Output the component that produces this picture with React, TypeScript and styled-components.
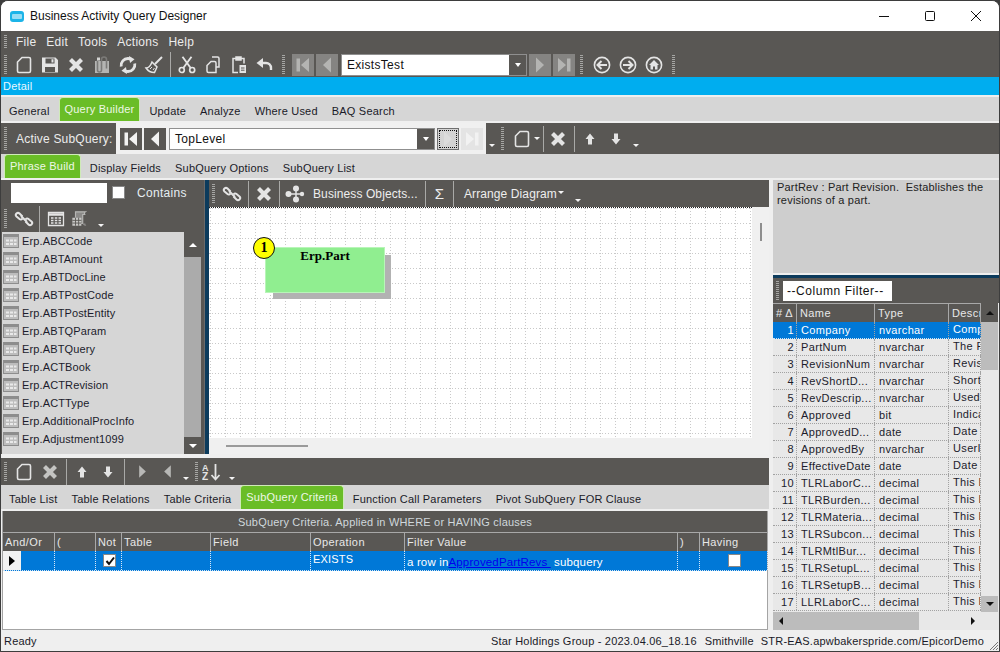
import React from "react";
import styled, { createGlobalStyle } from "styled-components";

const DARK = "#595754";
const LIGHT = "#efefef";
const STRIP = "#d6d6d6";
const ICON = "#e4e4e4";
const BLUE = "#0078d7";

const GlobalStyle = createGlobalStyle`
  html, body { margin: 0; padding: 0; background: #3d3d3d; }
  * { box-sizing: border-box; }
`;

const Window = styled.div`
  width: 1000px;
  height: 652px;
  display: flex;
  flex-direction: column;
  overflow: hidden;
  border: 1px solid #3d3d3d;
  border-radius: 8px 8px 0 0;
  background: ${LIGHT};
  font-family: "Liberation Sans", Arial, sans-serif;
  font-size: 11px;
  letter-spacing: 0.2px;
  color: #1a1a2a;
`;

const TitleBar = styled.div`
  height: 30px;
  flex: none;
  display: flex;
  align-items: center;
  background: #fff;
  padding-left: 9px;
  color: #111;
`;

const TitleIcon = styled.div`
  width: 14px;
  height: 11px;
  border-radius: 3px;
  background: #1cb4e8;
  border: 3px solid #1cb4e8;
  border-left-width: 2px;
  border-right-width: 2px;
  margin-right: 6px;
  &::after {
    content: "";
    display: block;
    height: 100%;
    background: #fff;
    border-radius: 1px;
    opacity: 0.55;
  }
`;

const TitleText = styled.span`
  flex: 1;
  font-size: 12px;
  letter-spacing: 0;
`;

const WinButton = styled.div`
  width: 46px;
  height: 30px;
  display: flex;
  align-items: center;
  justify-content: center;
  color: #111;
`;

const Bar = styled.div<{ $h: number; $pt?: number }>`
  height: ${(p) => p.$h}px;
  flex: none;
  display: flex;
  align-items: center;
  background: ${DARK};
  color: #eee;
  padding-top: ${(p) => p.$pt ?? 0}px;
`;

const Grip = styled.div<{ $h?: number; $ml?: number; $mr?: number }>`
  flex: none;
  width: 3px;
  height: ${(p) => p.$h ?? 20}px;
  margin-left: ${(p) => p.$ml ?? 3}px;
  margin-right: ${(p) => p.$mr ?? 4}px;
  background: repeating-linear-gradient(to bottom, #a6a6a4 0 1px, transparent 1px 2px);
`;

const MenuItem = styled.span`
  margin-right: 10px;
  color: #ececec;
  font-size: 12px;
  letter-spacing: 0.25px;
  &:first-of-type {
    margin-left: 1px;
  }
`;

const Slot = styled.div<{ $w?: number; $c?: string; $ml?: number }>`
  flex: none;
  width: ${(p) => p.$w ?? 26}px;
  height: 22px;
  margin-left: ${(p) => p.$ml ?? 0}px;
  display: flex;
  align-items: center;
  justify-content: center;
  color: ${(p) => p.$c ?? ICON};
`;

const Sep = styled.div<{ $w?: number; $h?: number }>`
  flex: none;
  width: ${(p) => p.$w ?? 6}px;
  height: ${(p) => p.$h ?? 26}px;
  display: flex;
  justify-content: center;
  &::before {
    content: "";
    width: 1px;
    background: #a9a9a7;
  }
`;

const NavButton = styled.div<{ $tone?: "off" | "on" | "focus" | "ghost"; $ml?: number }>`
  flex: none;
  width: 22px;
  height: 22px;
  margin-left: ${(p) => p.$ml ?? 2}px;
  display: flex;
  align-items: center;
  justify-content: center;
  background: ${(p) =>
    p.$tone === "on"
      ? DARK
      : p.$tone === "focus"
        ? "#d4d4d4"
        : p.$tone === "ghost"
          ? "#e4e4e4"
          : "#858482"};
  color: ${(p) =>
    p.$tone === "on"
      ? "#f2f2f2"
      : p.$tone === "focus"
        ? "#dcdcdc"
        : p.$tone === "ghost"
          ? "#f2f2f2"
          : "#b4b4b2"};
  border: ${(p) => (p.$tone === "focus" ? "1px solid #6f6f6f" : "none")};
  outline: ${(p) => (p.$tone === "focus" ? "1px dotted #111" : "none")};
  outline-offset: ${(p) => (p.$tone === "focus" ? "-3px" : "0")};
`;

const Combo = styled.div<{ $w: number; $ml?: number }>`
  flex: none;
  width: ${(p) => p.$w}px;
  height: 22px;
  margin-left: ${(p) => p.$ml ?? 3}px;
  display: flex;
  align-items: center;
  background: #fff;
  border: 1px solid #8f8f8f;
  color: #111;
  font-size: 12px;
  letter-spacing: 0.3px;
`;

const ComboText = styled.span`
  flex: 1;
  padding-left: 5px;
`;

const ComboArrow = styled.div`
  width: 17px;
  height: 100%;
  background: ${DARK};
  display: flex;
  align-items: center;
  justify-content: center;
  &::before {
    content: "";
    border: 3px solid transparent;
    border-top: 4px solid #fff;
    border-bottom: none;
  }
`;

const Caret = styled.div<{ $ml?: number; $mr?: number; $low?: boolean; $raise?: boolean }>`
  flex: none;
  margin-left: ${(p) => p.$ml ?? 0}px;
  margin-right: ${(p) => p.$mr ?? 0}px;
  margin-top: ${(p) => (p.$low ? 14 : p.$raise ? -3 : 0)}px;
  border: 3px solid transparent;
  border-top: 3px solid #f4f4f4;
  border-bottom: none;
  border-left-width: 3.5px;
  border-right-width: 3.5px;
`;

const DetailBar = styled.div`
  height: 18px;
  flex: none;
  background: #00adef;
  color: #eaf8ff;
  line-height: 18px;
  padding-left: 2px;
`;

const TabStrip = styled.div<{ $top?: number; $bottom?: number }>`
  height: 24px;
  flex: none;
  display: flex;
  gap: 4px;
  padding-left: 3px;
  background: ${STRIP};
  margin-top: ${(p) => p.$top ?? 0}px;
  margin-bottom: ${(p) => p.$bottom ?? 0}px;
`;

const Tab = styled.div<{ $active?: boolean }>`
  display: flex;
  align-items: center;
  white-space: nowrap;
  padding: ${(p) => (p.$active ? "0 5px 2px" : "3px 5px 0")};
  background: ${(p) => (p.$active ? "#6abd27" : "transparent")};
  color: ${(p) => (p.$active ? "#eef8e6" : "#1a1a28")};
  border: ${(p) => (p.$active ? "1px solid #cfeab8" : "none")};
  border-bottom: none;
  border-radius: ${(p) => (p.$active ? "4px 4px 0 0" : "0")};
`;

const SubLabel = styled.span`
  color: #ececec;
  font-size: 12px;
  margin-left: 3px;
  width: 100px;
  white-space: nowrap;
`;

const NavPanel = styled.div`
  flex: none;
  width: 370px;
  height: 100%;
  background: #f0f0f0;
  display: flex;
  align-items: center;
  padding-left: 2px;
`;

const Body = styled.div`
  flex: 1;
  min-height: 0;
  display: grid;
  grid-template-columns: 768px 4px 226px;
`;

const LeftArea = styled.div`
  display: flex;
  flex-direction: column;
  min-height: 0;
`;

const TopArea = styled.div`
  height: 274px;
  flex: none;
  display: grid;
  grid-template-columns: 203px 5px 560px;
  margin-bottom: 4px;
`;

const SourcePanel = styled.div`
  background: ${DARK};
  display: flex;
  flex-direction: column;
  min-height: 0;
`;

const FilterInput = styled.div<{ $w: number; $ml?: number }>`
  flex: none;
  width: ${(p) => p.$w}px;
  height: 20px;
  margin-left: ${(p) => p.$ml ?? 0}px;
  background: #fff;
  color: #111;
  line-height: 20px;
  padding-left: 4px;
  font-size: 12px;
  letter-spacing: 0.55px;
`;

const CheckBox = styled.div<{ $ml?: number }>`
  flex: none;
  width: 13px;
  height: 13px;
  margin-left: ${(p) => p.$ml ?? 0}px;
  background: #fff;
  border: 1px solid #888;
  display: flex;
  align-items: center;
  justify-content: center;
  color: #111;
`;

const ContainsLabel = styled.span`
  margin-left: 12px;
  color: #e6eef2;
  font-size: 12px;
  letter-spacing: 0.3px;
`;

const ListWrap = styled.div`
  flex: 1;
  min-height: 0;
  display: flex;
  margin-left: 1px;
  padding-right: 3px;
`;

const TableList = styled.div`
  flex: 1;
  background: ${STRIP};
  overflow: hidden;
`;

const ListItem = styled.div`
  height: 18px;
  display: flex;
  align-items: center;
  padding-left: 1px;
  color: #1c1c2c;
  letter-spacing: 0.13px;
  white-space: nowrap;
`;

const ItemIcon = styled.svg`
  width: 16px;
  height: 14px;
  margin-right: 3px;
  flex: none;
`;

const VRail = styled.div<{ $w: number; $bg: string }>`
  flex: none;
  width: ${(p) => p.$w}px;
  background: ${(p) => p.$bg};
  display: flex;
  flex-direction: column;
`;

const RailButton = styled.div<{ $h: number; $bg: string; $dir: "up" | "down"; $fg: string }>`
  flex: none;
  height: ${(p) => p.$h}px;
  background: ${(p) => p.$bg};
  display: flex;
  align-items: center;
  justify-content: center;
  &::before {
    content: "";
    border: 4px solid transparent;
    border-bottom: ${(p) => (p.$dir === "up" ? `4px solid ${p.$fg}` : "none")};
    border-top: ${(p) => (p.$dir === "down" ? `4px solid ${p.$fg}` : "none")};
  }
`;

const RailFill = styled.div`
  flex: 1;
`;

const Splitter = styled.div`
  background: #0c3b5c;
  border-left: 1px solid #6a6a6a;
`;

const CenterPanel = styled.div`
  display: flex;
  flex-direction: column;
  min-height: 0;
  background: #f0f0f0;
`;

const BarLabel = styled.span<{ $w?: number; $ml?: number }>`
  flex: none;
  width: ${(p) => (p.$w ? `${p.$w}px` : "auto")};
  margin-left: ${(p) => p.$ml ?? 0}px;
  color: #eeeeee;
  font-size: 12px;
  letter-spacing: 0.1px;
  white-space: nowrap;
`;

const Sigma = styled.span`
  width: 25px;
  flex: none;
  text-align: center;
  font-size: 15px;
  color: #eee;
`;

const CanvasRow = styled.div`
  flex: 1;
  min-height: 0;
  display: flex;
`;

const Canvas = styled.div`
  flex: 1;
  position: relative;
  overflow: hidden;
  background-color: #fff;
  border-top: 1px dotted #222;
  background-image:
    conic-gradient(from 270deg at 1px 1px, #c9c9c9 25%, transparent 0),
    conic-gradient(from 270deg at 1px 1px, #c9c9c9 25%, transparent 0);
  background-size: 15px 3px, 3px 15px;
  background-position: 1px 0, 0 0;
`;

const CanvasVRail = styled.div`
  width: 17px;
  flex: none;
  padding: 16px 0 0 8px;
`;

const VThumb = styled.div`
  width: 2px;
  height: 18px;
  background: #8e8e8e;
`;

const CanvasHRail = styled.div`
  height: 16px;
  flex: none;
  padding: 7px 0 0 17px;
`;

const HThumb = styled.div`
  width: 82px;
  height: 2px;
  background: #9a9a9a;
`;

const TableNode = styled.div`
  position: absolute;
  left: 56px;
  top: 39px;
  width: 120px;
  height: 46px;
  background: #90ee90;
  border: 1px solid #b8f5b8;
  box-shadow: 7px 7px 0 -1px #b2b2b2;
  text-align: center;
  font-family: "Liberation Serif", "Times New Roman", serif;
  font-weight: bold;
  font-size: 13px;
  letter-spacing: 0;
  color: #000;
`;

const NodeBadge = styled.div`
  position: absolute;
  left: 44px;
  top: 29px;
  width: 22px;
  height: 22px;
  border-radius: 50%;
  background: #ffff00;
  border: 1px solid #111;
  display: flex;
  align-items: center;
  justify-content: center;
  font-family: "Liberation Serif", "Times New Roman", serif;
  font-weight: bold;
  font-size: 14px;
  color: #000;
  z-index: 1;
`;

const CriteriaGrid = styled.div`
  flex: 1;
  min-height: 0;
  margin: 2px 1px 0 1px;
  background: #fff;
  border: 1px solid #a4a4a4;
  border-top: none;
  display: flex;
  flex-direction: column;
`;

const CriteriaCaption = styled.div`
  height: 21px;
  flex: none;
  background: ${DARK};
  color: #d0d8dc;
  text-align: center;
  line-height: 22px;
`;

const CRITERIA_COLS = "52px 41px 26px 89px 100px 94px 273px 22px 68px";

const CriteriaHead = styled.div`
  display: grid;
  grid-template-columns: ${CRITERIA_COLS};
  height: 19px;
  flex: none;
  background: ${DARK};
  border-top: 1px solid #a8a8a8;
`;

const HeadCell = styled.div`
  color: #e8e8e8;
  line-height: 18px;
  padding-left: 2px;
  border-right: 1px solid #a8a8a8;
  letter-spacing: 0.4px;
  white-space: nowrap;
  overflow: hidden;
`;

const CriteriaRow = styled.div`
  display: grid;
  grid-template-columns: ${CRITERIA_COLS};
  height: 20px;
  flex: none;
  background: ${BLUE};
  color: #fff;
  border-bottom: 1px dotted #cfe4f7;
`;

const RowCell = styled.div<{ $center?: boolean; $raise?: boolean }>`
  border-right: 1px dotted #d8e8f8;
  padding-left: 2px;
  padding-top: ${(p) => (p.$center ? 0 : p.$raise ? 2 : 3)}px;
  display: flex;
  align-items: ${(p) => (p.$raise ? "flex-start" : "center")};
  justify-content: ${(p) => (p.$center ? "center" : "flex-start")};
  white-space: pre;
`;

const FilterText = styled.span`
  font-size: 11.5px;
  letter-spacing: 0.15px;
`;

const SelectorCell = styled.div`
  display: flex;
  border-right: 1px dotted #d8e8f8;
`;

const RowSelector = styled.div`
  width: 18px;
  background: #f2f2f2;
  display: flex;
  align-items: center;
  justify-content: center;
  &::before {
    content: "";
    border: 5px solid transparent;
    border-left: 6px solid #000;
    border-right: none;
  }
`;

const QueryLink = styled.span`
  color: #0000ee;
  text-decoration: underline;
`;

const Gutter = styled.div`
  background: ${LIGHT};
`;

const RightPanel = styled.div`
  display: flex;
  flex-direction: column;
  min-height: 0;
`;

const Description = styled.div`
  height: 93px;
  flex: none;
  background: #cecece;
  padding: 1px 4px;
  color: #222;
  line-height: 13px;
  letter-spacing: 0.2px;
  white-space: pre-wrap;
`;

const HSplit = styled.div`
  height: 5px;
  flex: none;
  background: #0c3b5c;
  border-top: 2px solid ${LIGHT};
`;

const ColumnArea = styled.div`
  flex: 1;
  min-height: 0;
  display: flex;
  flex-direction: column;
  background: #e8e8e8;
`;

const ColumnBody = styled.div`
  flex: 1;
  min-height: 0;
  display: flex;
`;

const ColumnTable = styled.div`
  width: 208px;
  flex: none;
  overflow: hidden;
`;

const COLUMN_COLS = "24px 78px 74px 32px";

const ColumnHead = styled.div`
  display: grid;
  grid-template-columns: ${COLUMN_COLS};
  height: 19px;
  background: ${DARK};
  border-top: 1px solid #a8a8a8;
`;

const ColumnHeadCell = styled.div`
  color: #e8e8e8;
  line-height: 18px;
  padding-left: 3px;
  border-right: 1px solid #a8a8a8;
  white-space: nowrap;
  overflow: hidden;
  letter-spacing: 0.4px;
`;

const ColumnRow = styled.div<{ $selected?: boolean }>`
  display: grid;
  grid-template-columns: ${COLUMN_COLS};
  height: 17px;
  background: ${(p) => (p.$selected ? BLUE : "#e8e8e8")};
  color: ${(p) => (p.$selected ? "#fff" : "#1c1c2c")};
  border-bottom: 1px dotted ${(p) => (p.$selected ? "#cfe4f7" : "#a2a2a2")};
`;

const ColumnCell = styled.div<{ $num?: boolean; $raise?: boolean }>`
  border-right: 1px dotted #a2a2a2;
  line-height: ${(p) => (p.$raise ? 14 : 17)}px;
  padding: ${(p) => (p.$num ? "0 2px 0 0" : "0 0 0 4px")};
  text-align: ${(p) => (p.$num ? "right" : "left")};
  white-space: nowrap;
  overflow: hidden;
  letter-spacing: 0.35px;
`;

const HScroll = styled.div`
  height: 18px;
  flex: none;
  display: flex;
  align-items: stretch;
`;

const HScrollTrack = styled.div`
  width: 208px;
  flex: none;
  display: flex;
  background: #e8e8e8;
  position: relative;
`;

const HScrollThumb = styled.div`
  width: 146px;
  background: #bcbcbc;
`;

const ArrowGlyph = styled.div<{ $dir: "left" | "right" }>`
  position: absolute;
  top: 5px;
  ${(p) => (p.$dir === "left" ? "left: 6px;" : "right: 6px;")}
  border: 4px solid transparent;
  border-${(p) => (p.$dir === "left" ? "right" : "left")}: 4px solid #111;
  border-${(p) => p.$dir}: none;
`;

const StatusBar = styled.div`
  height: 21px;
  flex: none;
  display: flex;
  align-items: center;
  padding: 0 15px 0 3px;
  background: ${LIGHT};
  position: relative;
  color: #1a1a28;
`;

const StatusGap = styled.span<{ $w: number }>`
  flex: none;
  width: ${(p) => p.$w}px;
`;

const StatusFill = styled.span`
  flex: 1;
`;

const ResizeGrip = styled.svg`
  position: absolute;
  right: 0;
  bottom: 0;
  width: 12px;
  height: 12px;
`;

const Icon = styled.svg<{ $s?: number }>`
  width: ${(p) => p.$s ?? 20}px;
  height: ${(p) => p.$s ?? 20}px;
  display: block;
`;

type Ico = { s?: number };

const NewDoc = ({ s }: Ico) => (
  <Icon $s={s} viewBox="0 0 20 20" fill="none" stroke="currentColor" strokeWidth="1.6">
    <path d="M8 2.5h7a1.5 1.5 0 0 1 1.5 1.5v12a1.5 1.5 0 0 1-1.5 1.5H5A1.5 1.5 0 0 1 3.5 16V7z" />
  </Icon>
);
const Save = () => (
  <Icon viewBox="0 0 20 20" fill="currentColor" fillRule="evenodd">
    <path d="M2 2.5h13.5L18 5v12.5H2zM5.500 3.500v5h9v-5zM5 12v5h10v-5z" />
    <path d="M11.500 4.200h2v3.200h-2z" />
  </Icon>
);
const Cross = () => (
  <Icon viewBox="0 0 20 20" fill="none" stroke="currentColor" strokeWidth="4.2">
    <path d="M4.500 4.500l11 11M15.500 4.500l-11 11" />
  </Icon>
);
const ClipDoc = () => (
  <Icon viewBox="0 0 20 20" fill="none">
    <path d="M3 6h14v12H3z" fill="#b4b4b2" />
    <path d="M7 4.500v10a2 2 0 0 0 4 0V4a2.500 2.500 0 0 1 5 0v9" stroke="#7b7a78" strokeWidth="1.6" transform="translate(-1.5 .5)" />
    <path d="M5 2.500h3v3H5z" fill="#d4d4d2" />
  </Icon>
);
const Refresh = () => (
  <Icon viewBox="0 0 20 20" fill="none" stroke="currentColor" strokeWidth="2.8">
    <path d="M3.200 11.500A7 7 0 0 1 10 3.500c1 0 2 .2 3 .8" />
    <path d="M16.800 8.500A7 7 0 0 1 10 16.500c-1 0-2-.2-3-.8" />
    <path d="M11 1l5.500 3.200L12 8z" fill="currentColor" stroke="none" />
    <path d="M9 19l-5.500-3.200L8 12z" fill="currentColor" stroke="none" />
  </Icon>
);
const Broom = () => (
  <Icon viewBox="0 0 20 20" fill="none" stroke="currentColor" strokeWidth="1.5">
    <path d="M11 9l7-7" strokeWidth="2" />
    <path d="M8 7l5 5-2.500 5.500C8 17.500 4 16 2 13c2 0 4.500-2 6-6z" />
    <path d="M6 14l2-2M9 15l1.500-2" strokeWidth="1" />
  </Icon>
);
const Scissors = () => (
  <Icon viewBox="0 0 20 20" fill="none" stroke="currentColor" strokeWidth="1.7">
    <circle cx="4.800" cy="15" r="2.500" />
    <circle cx="15.200" cy="15" r="2.500" />
    <path d="M6.300 13L14.500 1.800M13.700 13L5.500 1.800" strokeWidth="1.9" />
  </Icon>
);
const Copy = () => (
  <Icon viewBox="0 0 20 20" fill="none" stroke="currentColor" strokeWidth="1.5">
    <path d="M9 2h5.500A1.500 1.500 0 0 1 16 3.500v8.500h-3" />
    <path d="M8 6.500h3.500A1.500 1.500 0 0 1 13 8v9.500H5.500A1.500 1.500 0 0 1 4 16V10.500z" />
  </Icon>
);
const Paste = () => (
  <Icon viewBox="0 0 20 20" fill="none" stroke="currentColor" strokeWidth="1.5">
    <path d="M7 3.500H4v14h5M12 3.500h3v5" />
    <path d="M7 2h5v3H7z" fill="currentColor" />
    <path d="M10.500 10H17v8h-6.500z" fill="currentColor" stroke="none" />
    <path d="M12 13h3.500M12 15.200h3.500" stroke="#595754" strokeWidth="1" />
  </Icon>
);
const Undo = () => (
  <Icon viewBox="0 0 20 20" fill="none" stroke="currentColor" strokeWidth="2.4">
    <path d="M6 8h5a5 5 0 0 1 5 5v2" />
    <path d="M8 3v10L1.500 8z" fill="currentColor" stroke="none" />
  </Icon>
);
const First = () => (
  <Icon $s={18} viewBox="0 0 18 18" fill="currentColor">
    <path d="M2.500 2.500h3.500v13H2.500zM15 2L7 9l8 7z" />
  </Icon>
);
const Prev = ({ s = 18 }: Ico) => (
  <Icon $s={s} viewBox="0 0 18 18" fill="currentColor">
    <path d="M13 1.500L5 9l8 7.500z" />
  </Icon>
);
const Next = ({ s = 18 }: Ico) => (
  <Icon $s={s} viewBox="0 0 18 18" fill="currentColor">
    <path d="M5 1.500L13 9l-8 7.500z" />
  </Icon>
);
const Last = () => (
  <Icon $s={18} viewBox="0 0 18 18" fill="currentColor">
    <path d="M15.500 2.500H12v13h3.500zM3 2l8 7-8 7z" />
  </Icon>
);
const Back = () => (
  <Icon viewBox="0 0 20 20" fill="none" stroke="currentColor" strokeWidth="1.6">
    <circle cx="10" cy="10" r="7.600" />
    <path d="M15 10H6M9.500 6l-4 4 4 4" strokeWidth="2" />
  </Icon>
);
const Forward = () => (
  <Icon viewBox="0 0 20 20" fill="none" stroke="currentColor" strokeWidth="1.6">
    <circle cx="10" cy="10" r="7.600" />
    <path d="M5 10h9M10.500 6l4 4-4 4" strokeWidth="2" />
  </Icon>
);
const Home = () => (
  <Icon viewBox="0 0 20 20" fill="none" stroke="currentColor" strokeWidth="1.6">
    <circle cx="10" cy="10" r="7.600" />
    <path d="M10 5L5 10h1.500v4.500h2.500v-3h2v3h2.500V10H15z" fill="currentColor" stroke="none" />
  </Icon>
);
const Chain = () => (
  <Icon viewBox="0 0 20 20" fill="none" stroke="currentColor" strokeWidth="2">
    <path d="M8.500 7.500L5.500 4.500a2.100 2.100 0 0 0-3 3l3 2.500a2.100 2.100 0 0 0 3-.5" />
    <path d="M11.500 12.500l3 3a2.100 2.100 0 0 0 3-3l-3-2.500a2.100 2.100 0 0 0-3 .5" />
    <path d="M7 7l6 6" />
  </Icon>
);
const TableIcon = () => (
  <Icon viewBox="0 0 20 20" fill="none" stroke="currentColor" strokeWidth="1.3">
    <path d="M2.500 3.500h15v13h-15z" />
    <path d="M2.500 5.500h15" strokeWidth="2.500" />
    <path d="M5 9h2.500M8.800 9h2.500M12.500 9H15M5 11.500h2.500M8.800 11.500h2.500M12.500 11.500H15M5 14h2.500M8.800 14h2.500M12.500 14H15" strokeWidth="1.6" />
  </Icon>
);
const TableScroll = () => (
  <Icon viewBox="0 0 20 20" fill="none" stroke="#b6b6b4" strokeWidth="1.3">
    <path d="M5 2h11c-1.500 1-1.500 3 0 3H13v10H5z" fill="#8b8a88" />
    <path d="M1.500 8.500h10v9h-10z" fill="#c8c8c6" stroke="none" />
    <path d="M1.500 11.500h10M1.500 14.500h10M5 8.500v9M8.500 8.500v9" stroke="#595754" strokeWidth="1" />
    <path d="M13 15c0 2 2 2.500 4 2.500-1-1-1-2.500-1-2.500z" fill="#8b8a88" stroke="none" />
  </Icon>
);
const Nodes = () => (
  <Icon viewBox="0 0 20 20" fill="currentColor" stroke="currentColor" strokeWidth="1.5">
    <circle cx="11" cy="4.500" r="3" stroke="none" />
    <circle cx="3.500" cy="10" r="3" stroke="none" />
    <circle cx="17" cy="10" r="2.200" stroke="none" />
    <circle cx="11" cy="15.500" r="3" stroke="none" />
    <path d="M3.500 10h13M11 4.500v11" />
  </Icon>
);
const UpArrow = () => (
  <Icon viewBox="0 0 20 20" fill="currentColor">
    <path d="M10 4.500L14.500 10H12v5.500H8V10H5.500z" />
  </Icon>
);
const DownArrow = () => (
  <Icon viewBox="0 0 20 20" fill="currentColor">
    <path d="M10 15.500L14.500 10H12V4.500H8V10H5.500z" />
  </Icon>
);
const SortAZ = () => (
  <Icon viewBox="0 0 22 20" style={{ width: 22 }} fill="currentColor">
    <text x="0" y="8.500" fontSize="9" fontWeight="bold" fontFamily="Liberation Sans">A</text>
    <text x="0" y="18" fontSize="10" fontWeight="bold" fontFamily="Liberation Sans">Z</text>
    <path d="M13.500 2v15M9.500 13l4 4.500 4-4.500" fill="none" stroke="currentColor" strokeWidth="1.8" />
  </Icon>
);

const CheckMark = () => (
  <svg width="10" height="10" viewBox="0 0 10 10" fill="none" stroke="currentColor" strokeWidth="2">
    <path d="M1.500 5l2.500 3 5-6.500" />
  </svg>
);

const MENU = ["File", "Edit", "Tools", "Actions", "Help"];
const TABLES = [
  "ABCCode", "ABTAmount", "ABTDocLine", "ABTPostCode", "ABTPostEntity", "ABTQParam",
  "ABTQuery", "ACTBook", "ACTRevision", "ACTType", "AdditionalProcInfo", "Adjustment1099",
];
const COLUMNS: [string, string, string][] = [
  ["Company", "nvarchar", "Comp"],
  ["PartNum", "nvarchar", "The P"],
  ["RevisionNum", "nvarchar", "Revis"],
  ["RevShortD...", "nvarchar", "Short"],
  ["RevDescrip...", "nvarchar", "Used"],
  ["Approved", "bit", "Indica"],
  ["ApprovedD...", "date", "Date"],
  ["ApprovedBy", "nvarchar", "UserI"],
  ["EffectiveDate", "date", "Date a"],
  ["TLRLaborC...", "decimal", "This L"],
  ["TLRBurden...", "decimal", "This L"],
  ["TLRMateria...", "decimal", "This L"],
  ["TLRSubcon...", "decimal", "This L"],
  ["TLRMtlBur...", "decimal", "This L"],
  ["TLRSetupL...", "decimal", "This L"],
  ["TLRSetupB...", "decimal", "This L"],
  ["LLRLaborC...", "decimal", "This L"],
];

const ListTableIcon = () => (
  <ItemIcon viewBox="0 0 16 14">
    <rect x="0.500" y="0.500" width="15" height="13" fill="#bdbdbd" stroke="#8d8d8d" />
    <rect x="1" y="1" width="14" height="2" fill="#8d8d8d" />
    <path d="M3 5.500h3v2H3zM7 5.500h3v2H7zM11 5.500h2.500v2H11zM3 9h3v2H3zM7 9h3v2H7zM11 9h2.500v2H11z" fill="#e9e9e9" />
  </ItemIcon>
);

const App: React.FC = () => {
  return (
    <Window>
      <GlobalStyle />
      <TitleBar>
        <TitleIcon />
        <TitleText>Business Activity Query Designer</TitleText>
        <WinButton>
          <svg width="10" height="10" viewBox="0 0 10 10" stroke="currentColor">
            <path d="M0 5.500h10" />
          </svg>
        </WinButton>
        <WinButton>
          <svg width="10" height="10" viewBox="0 0 10 10" fill="none" stroke="currentColor">
            <rect x="0.500" y="0.500" width="9" height="9" rx="1" />
          </svg>
        </WinButton>
        <WinButton>
          <svg width="10" height="10" viewBox="0 0 10 10" stroke="currentColor">
            <path d="M0 0l10 10M10 0L0 10" />
          </svg>
        </WinButton>
      </TitleBar>

      <Bar $h={19} $pt={2}>
        <Grip $h={14} $mr={8} />
        {MENU.map((m) => (
          <MenuItem key={m}>{m}</MenuItem>
        ))}
      </Bar>

      <Bar $h={27} $pt={2}>
        <Grip />
        <Slot><NewDoc /></Slot>
        <Slot><Save /></Slot>
        <Slot><Cross /></Slot>
        <Slot><ClipDoc /></Slot>
        <Slot><Refresh /></Slot>
        <Slot><Broom /></Slot>
        <Sep $w={7} />
        <Slot><Scissors /></Slot>
        <Slot><Copy /></Slot>
        <Slot><Paste /></Slot>
        <Slot><Undo /></Slot>
        <Grip $ml={4} $mr={7} />
        <NavButton $ml={0}><First /></NavButton>
        <NavButton><Prev /></NavButton>
        <Combo $w={186}>
          <ComboText>ExistsTest</ComboText>
          <ComboArrow />
        </Combo>
        <NavButton><Next /></NavButton>
        <NavButton><Last /></NavButton>
        <Grip $ml={5} $mr={6} />
        <Slot><Back /></Slot>
        <Slot><Forward /></Slot>
        <Slot><Home /></Slot>
        <Grip $ml={5} />
      </Bar>

      <DetailBar>Detail</DetailBar>

      <TabStrip $top={2} $bottom={2}>
        <Tab>General</Tab>
        <Tab $active>Query Builder</Tab>
        <Tab>Update</Tab>
        <Tab>Analyze</Tab>
        <Tab>Where Used</Tab>
        <Tab>BAQ Search</Tab>
      </TabStrip>

      <Bar $h={31}>
        <Grip $h={24} $mr={6} />
        <SubLabel>Active SubQuery:</SubLabel>
        <NavPanel>
          <NavButton $tone="on"><First /></NavButton>
          <NavButton $tone="on"><Prev /></NavButton>
          <Combo $w={266}>
            <ComboText>TopLevel</ComboText>
            <ComboArrow />
          </Combo>
          <NavButton $tone="focus"><Next /></NavButton>
          <NavButton $tone="ghost"><Last /></NavButton>
        </NavPanel>
        <Caret $ml={3} $low />
        <Grip $ml={6} $mr={8} $h={24} />
        <Slot $w={20}><NewDoc /></Slot>
        <Caret $ml={2} $mr={1} />
        <Sep $w={4} />
        <Slot><Cross /></Slot>
        <Sep $w={6} />
        <Slot><UpArrow /></Slot>
        <Slot><DownArrow /></Slot>
        <Caret $ml={4} $low />
      </Bar>

      <TabStrip $bottom={2}>
        <Tab $active>Phrase Build</Tab>
        <Tab>Display Fields</Tab>
        <Tab>SubQuery Options</Tab>
        <Tab>SubQuery List</Tab>
      </TabStrip>

      <Body>
        <LeftArea>
          <TopArea>
            <SourcePanel>
              <Bar $h={25}>
                <FilterInput $w={96} $ml={10} />
                <CheckBox $ml={5} />
                <ContainsLabel>Contains</ContainsLabel>
              </Bar>
              <Bar $h={27}>
                <Grip />
                <Slot><Chain /></Slot>
                <Sep $w={4} />
                <Slot $w={30}><TableIcon /></Slot>
                <Slot $w={18}><TableScroll /></Slot>
                <Caret $ml={9} $low />
              </Bar>
              <ListWrap>
                <TableList>
                  {TABLES.map((t) => (
                    <ListItem key={t}>
                      <ListTableIcon />
                      Erp.{t}
                    </ListItem>
                  ))}
                </TableList>
                <VRail $w={17} $bg="#ababab">
                  <RailButton $h={25} $bg={DARK} $dir="up" $fg="#fff" />
                  <RailFill />
                  <RailButton $h={17} $bg={DARK} $dir="down" $fg="#fff" />
                </VRail>
              </ListWrap>
            </SourcePanel>
            <Splitter />
            <CenterPanel>
              <Bar $h={27}>
                <Grip />
                <Slot><Chain /></Slot>
                <Sep $w={6} />
                <Slot><Cross /></Slot>
                <Sep $w={4} />
                <Slot $w={24} $ml={2}><Nodes /></Slot>
                <BarLabel $w={110} $ml={6}>Business Objects...</BarLabel>
                <Sep $w={4} />
                <Sigma>Σ</Sigma>
                <Sep $w={2} />
                <BarLabel $ml={10}>Arrange Diagram</BarLabel>
                <Caret $ml={1} $raise />
                <Caret $ml={11} $low />
              </Bar>
              <CanvasRow>
                <Canvas>
                  <NodeBadge>1</NodeBadge>
                  <TableNode>Erp.Part</TableNode>
                </Canvas>
                <CanvasVRail>
                  <VThumb />
                </CanvasVRail>
              </CanvasRow>
              <CanvasHRail>
                <HThumb />
              </CanvasHRail>
            </CenterPanel>
          </TopArea>

          <Bar $h={27}>
            <Grip />
            <Slot><NewDoc /></Slot>
            <Slot $c="#c4c4c2"><Cross /></Slot>
            <Sep $w={6} />
            <Slot><UpArrow /></Slot>
            <Slot><DownArrow /></Slot>
            <Sep $w={6} />
            <Slot $c="#b8b8b6" $ml={2}><Next s={15} /></Slot>
            <Slot $w={24} $c="#b8b8b6"><Prev s={15} /></Slot>
            <Caret $ml={4} $low />
            <Grip $ml={6} $mr={2} />
            <Slot><SortAZ /></Slot>
            <Caret $ml={3} $low />
          </Bar>

          <TabStrip>
            <Tab>Table List</Tab>
            <Tab>Table Relations</Tab>
            <Tab>Table Criteria</Tab>
            <Tab $active>SubQuery Criteria</Tab>
            <Tab>Function Call Parameters</Tab>
            <Tab>Pivot SubQuery FOR Clause</Tab>
          </TabStrip>

          <CriteriaGrid>
            <CriteriaCaption>SubQuery Criteria. Applied in WHERE or HAVING clauses</CriteriaCaption>
            <CriteriaHead>
              <HeadCell>And/Or</HeadCell>
              <HeadCell>(</HeadCell>
              <HeadCell>Not</HeadCell>
              <HeadCell>Table</HeadCell>
              <HeadCell>Field</HeadCell>
              <HeadCell>Operation</HeadCell>
              <HeadCell>Filter Value</HeadCell>
              <HeadCell>)</HeadCell>
              <HeadCell>Having</HeadCell>
            </CriteriaHead>
            <CriteriaRow>
              <SelectorCell><RowSelector /></SelectorCell>
              <RowCell />
              <RowCell $center>
                <CheckBox><CheckMark /></CheckBox>
              </RowCell>
              <RowCell />
              <RowCell />
              <RowCell $raise>EXISTS</RowCell>
              <RowCell>
                <FilterText>
                  a row in<QueryLink>ApprovedPartRevs </QueryLink> subquery
                </FilterText>
              </RowCell>
              <RowCell />
              <RowCell $center>
                <CheckBox />
              </RowCell>
            </CriteriaRow>
          </CriteriaGrid>
        </LeftArea>

        <Gutter />

        <RightPanel>
          <Description>PartRev : Part Revision.  Establishes the revisions of a part.</Description>
          <HSplit />
          <Bar $h={25}>
            <Grip $mr={4} />
            <FilterInput $w={109}>--Column Filter--</FilterInput>
          </Bar>
          <ColumnArea>
            <ColumnBody>
              <ColumnTable>
                <ColumnHead>
                  <ColumnHeadCell># Δ</ColumnHeadCell>
                  <ColumnHeadCell>Name</ColumnHeadCell>
                  <ColumnHeadCell>Type</ColumnHeadCell>
                  <ColumnHeadCell>Descr</ColumnHeadCell>
                </ColumnHead>
                {COLUMNS.map(([name, type, desc], i) => (
                  <ColumnRow key={name} $selected={i === 0}>
                    <ColumnCell $num>{i + 1}</ColumnCell>
                    <ColumnCell>{name}</ColumnCell>
                    <ColumnCell>{type}</ColumnCell>
                    <ColumnCell $raise>{desc}</ColumnCell>
                  </ColumnRow>
                ))}
              </ColumnTable>
              <VRail $w={17} $bg="#e8e8e8">
                <RailButton $h={19} $bg={DARK} $dir="up" $fg="#111" />
                <RailButton $h={48} $bg="#bcbcbc" $dir="up" $fg="transparent" />
                <RailFill />
                <RailButton $h={16} $bg="#bcbcbc" $dir="down" $fg="#111" />
              </VRail>
            </ColumnBody>
            <HScroll>
              <HScrollTrack>
                <HScrollThumb />
                <ArrowGlyph $dir="left" />
                <ArrowGlyph $dir="right" />
              </HScrollTrack>
            </HScroll>
          </ColumnArea>
        </RightPanel>
      </Body>

      <StatusBar>
        <span>Ready</span>
        <StatusFill />
        <span>Star Holdings Group - 2023.04.06_18.16</span>
        <StatusGap $w={8} />
        <span>Smithville</span>
        <StatusGap $w={7} />
        <span>STR-EAS.apwbakerspride.com/EpicorDemo</span>
        <ResizeGrip viewBox="0 0 12 12" stroke="#777">
          <path d="M11 3L3 11M11 6l-5 5M11 9l-2 2" />
        </ResizeGrip>
      </StatusBar>
    </Window>
  );
};

export default App;
